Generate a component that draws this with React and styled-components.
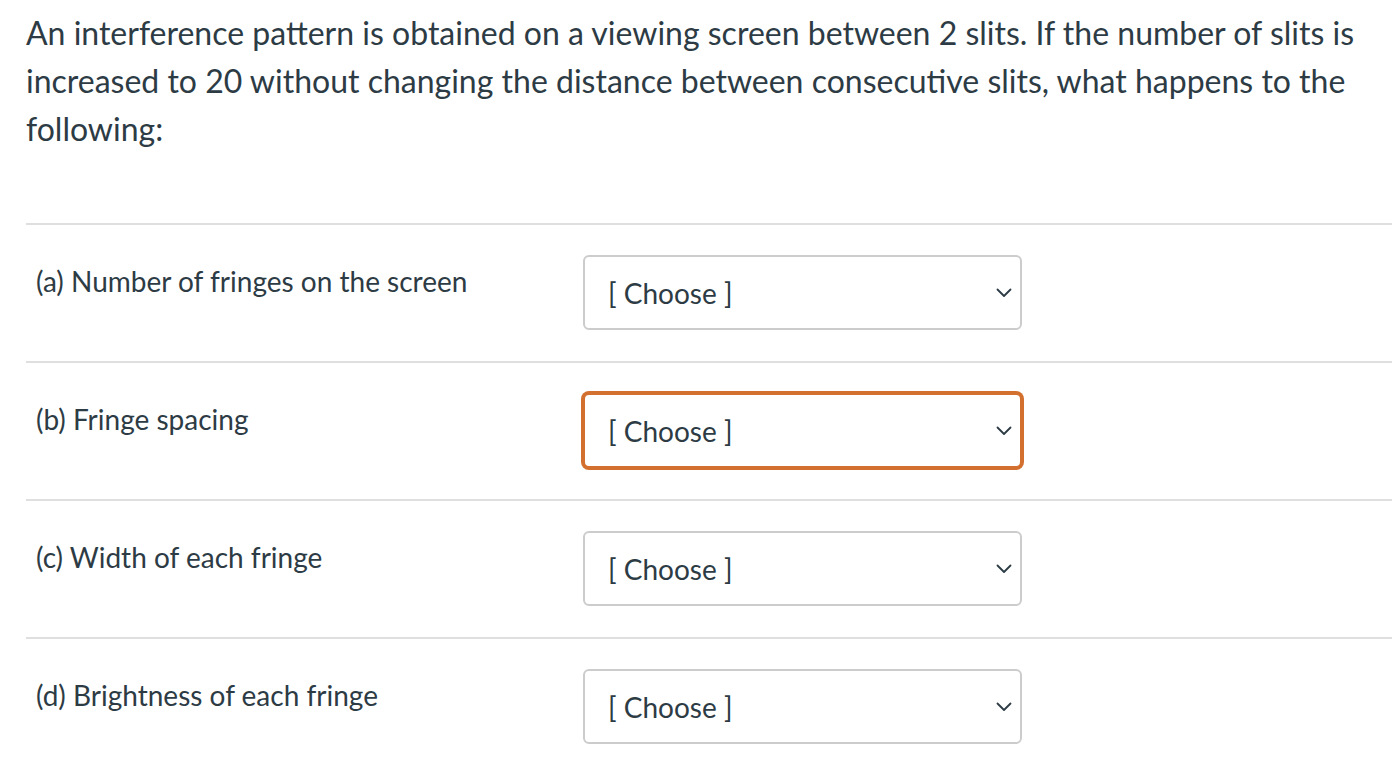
import React from 'react';
import styled, { createGlobalStyle } from 'styled-components';

const GlobalStyle = createGlobalStyle`
  body {
    margin: 0;
    background: #fff;
    font-family: Lato, "Helvetica Neue", Arial, sans-serif;
    color: #2d3b45;
  }
`;

const items = [
  { label: '(a) Number of fringes on the screen' },
  { label: '(b) Fringe spacing', focused: true },
  { label: '(c) Width of each fringe' },
  { label: '(d) Brightness of each fringe' },
];

const Chevron = () => (
  <svg width="16" height="10" viewBox="0 0 16 10" fill="none">
    <path d="M1.5 1.5 L8 8 L14.5 1.5" stroke="#2d3b45" strokeWidth="1.8" strokeLinecap="round" strokeLinejoin="round" />
  </svg>
);

const App = () => {
  return (
    <Page>
      <GlobalStyle />
      <Question>
        An interference pattern is obtained on a viewing screen between 2 slits. If the number of slits is
        increased to 20 without changing the distance between consecutive slits, what happens to the
        following:
      </Question>
      <Answers>
        {items.map(({ label, focused }) => (
          <Row key={label}>
            <Label>{label}</Label>
            <Select $focused={focused}>
              <span>[ Choose ]</span>
              <Chevron />
            </Select>
          </Row>
        ))}
      </Answers>
    </Page>
  );
};

const Page = styled.div`
  padding: 9px 0 0 26px;
  width: 1366px;
  overflow: hidden;
`;

const Question = styled.p`
  margin: 0;
  font-size: 32px;
  line-height: 48px;
  padding-right: 10px;
`;

const Answers = styled.div`
  margin-top: 70px;
  display: flex;
  flex-direction: column;
`;

const Row = styled.div`
  display: flex;
  align-items: flex-start;
  border-top: 2px solid #dfdfdf;
  padding: 30px 0 31px 10px;
`;

const Label = styled.div`
  width: 547px;
  font-size: 28px;
  line-height: 42px;
  padding-top: 5px;
`;

const Select = styled.div`
  box-sizing: border-box;
  width: 439px;
  height: 75px;
  display: flex;
  align-items: center;
  justify-content: space-between;
  padding: 0 8px 0 23px;
  border: 2px solid ${({ $focused }) => ($focused ? '#d3702f' : '#cccccc')};
  box-shadow: ${({ $focused }) => ($focused ? '0 0 0 2px #d3702f' : 'none')};
  border-radius: 6px;
  font-size: 28px;
  background: #fff;
  span {
    padding-top: 1px;
  }
`;

export default App;
